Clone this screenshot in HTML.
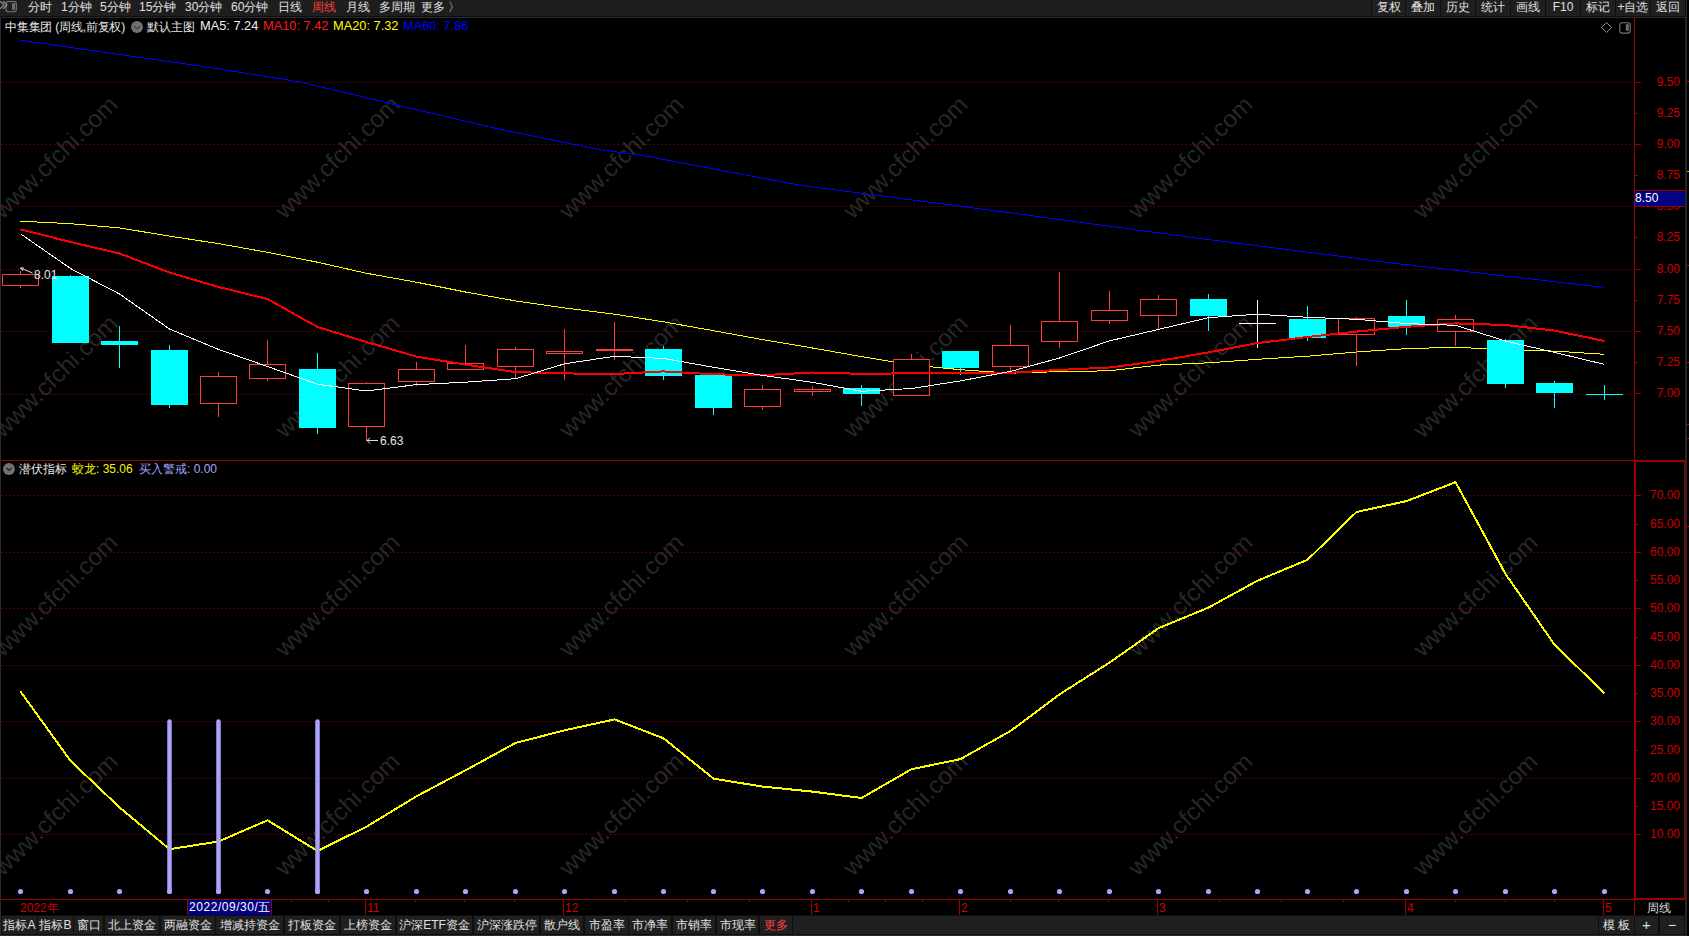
<!DOCTYPE html>
<html><head><meta charset="utf-8"><style>
html,body{margin:0;padding:0;background:#000;width:1689px;height:936px;overflow:hidden;position:relative;font-family:"Liberation Sans",sans-serif;}
.tb{position:absolute;left:0;top:0;width:1689px;height:16px;background:#1e1e1e;}
.sep{position:absolute;left:0;top:16px;width:1689px;height:1px;background:#0e0e0e;}
.sep2{position:absolute;left:0;top:17px;width:1687px;height:1px;background:#2b2b2b;}
.t{position:absolute;white-space:nowrap;font-size:12px;line-height:14px;color:#e0e0e0;}
.bb{position:absolute;left:1px;top:915px;width:1686px;height:20px;background:#0e0e0e;}
.bb2{position:absolute;left:0;top:935px;width:1687px;height:1px;background:#2b2b2b;}
.btn{position:absolute;top:916px;height:18px;background:#1f1f1f;color:#e0e0e0;font-size:12px;line-height:18px;text-align:center;white-space:nowrap;}
.rb{position:absolute;top:0;height:16px;background:#1f1f1f;color:#e0e0e0;font-size:12px;line-height:14px;text-align:center;}
.rbg{position:absolute;top:0;left:1371px;width:316px;height:16px;background:#0e0e0e;}
</style></head><body>
<div class="tb"></div><div class="sep"></div><div class="sep2"></div>
<svg width="1689" height="936" viewBox="0 0 1689 936" style="position:absolute;left:0;top:0">
<g font-family="Liberation Sans, sans-serif" font-size="24" fill="#272727">
<text x="55" y="157" text-anchor="middle" dominant-baseline="central" textLength="163" lengthAdjust="spacingAndGlyphs" transform="rotate(-44.4 55 157)">www.cfchi.com</text>
<text x="337" y="157" text-anchor="middle" dominant-baseline="central" textLength="163" lengthAdjust="spacingAndGlyphs" transform="rotate(-44.4 337 157)">www.cfchi.com</text>
<text x="621" y="157" text-anchor="middle" dominant-baseline="central" textLength="163" lengthAdjust="spacingAndGlyphs" transform="rotate(-44.4 621 157)">www.cfchi.com</text>
<text x="905" y="157" text-anchor="middle" dominant-baseline="central" textLength="163" lengthAdjust="spacingAndGlyphs" transform="rotate(-44.4 905 157)">www.cfchi.com</text>
<text x="1190" y="157" text-anchor="middle" dominant-baseline="central" textLength="163" lengthAdjust="spacingAndGlyphs" transform="rotate(-44.4 1190 157)">www.cfchi.com</text>
<text x="1475" y="157" text-anchor="middle" dominant-baseline="central" textLength="163" lengthAdjust="spacingAndGlyphs" transform="rotate(-44.4 1475 157)">www.cfchi.com</text>
<text x="55" y="376" text-anchor="middle" dominant-baseline="central" textLength="163" lengthAdjust="spacingAndGlyphs" transform="rotate(-44.4 55 376)">www.cfchi.com</text>
<text x="337" y="376" text-anchor="middle" dominant-baseline="central" textLength="163" lengthAdjust="spacingAndGlyphs" transform="rotate(-44.4 337 376)">www.cfchi.com</text>
<text x="621" y="376" text-anchor="middle" dominant-baseline="central" textLength="163" lengthAdjust="spacingAndGlyphs" transform="rotate(-44.4 621 376)">www.cfchi.com</text>
<text x="905" y="376" text-anchor="middle" dominant-baseline="central" textLength="163" lengthAdjust="spacingAndGlyphs" transform="rotate(-44.4 905 376)">www.cfchi.com</text>
<text x="1190" y="376" text-anchor="middle" dominant-baseline="central" textLength="163" lengthAdjust="spacingAndGlyphs" transform="rotate(-44.4 1190 376)">www.cfchi.com</text>
<text x="1475" y="376" text-anchor="middle" dominant-baseline="central" textLength="163" lengthAdjust="spacingAndGlyphs" transform="rotate(-44.4 1475 376)">www.cfchi.com</text>
<text x="55" y="595" text-anchor="middle" dominant-baseline="central" textLength="163" lengthAdjust="spacingAndGlyphs" transform="rotate(-44.4 55 595)">www.cfchi.com</text>
<text x="337" y="595" text-anchor="middle" dominant-baseline="central" textLength="163" lengthAdjust="spacingAndGlyphs" transform="rotate(-44.4 337 595)">www.cfchi.com</text>
<text x="621" y="595" text-anchor="middle" dominant-baseline="central" textLength="163" lengthAdjust="spacingAndGlyphs" transform="rotate(-44.4 621 595)">www.cfchi.com</text>
<text x="905" y="595" text-anchor="middle" dominant-baseline="central" textLength="163" lengthAdjust="spacingAndGlyphs" transform="rotate(-44.4 905 595)">www.cfchi.com</text>
<text x="1190" y="595" text-anchor="middle" dominant-baseline="central" textLength="163" lengthAdjust="spacingAndGlyphs" transform="rotate(-44.4 1190 595)">www.cfchi.com</text>
<text x="1475" y="595" text-anchor="middle" dominant-baseline="central" textLength="163" lengthAdjust="spacingAndGlyphs" transform="rotate(-44.4 1475 595)">www.cfchi.com</text>
<text x="55" y="814" text-anchor="middle" dominant-baseline="central" textLength="163" lengthAdjust="spacingAndGlyphs" transform="rotate(-44.4 55 814)">www.cfchi.com</text>
<text x="337" y="814" text-anchor="middle" dominant-baseline="central" textLength="163" lengthAdjust="spacingAndGlyphs" transform="rotate(-44.4 337 814)">www.cfchi.com</text>
<text x="621" y="814" text-anchor="middle" dominant-baseline="central" textLength="163" lengthAdjust="spacingAndGlyphs" transform="rotate(-44.4 621 814)">www.cfchi.com</text>
<text x="905" y="814" text-anchor="middle" dominant-baseline="central" textLength="163" lengthAdjust="spacingAndGlyphs" transform="rotate(-44.4 905 814)">www.cfchi.com</text>
<text x="1190" y="814" text-anchor="middle" dominant-baseline="central" textLength="163" lengthAdjust="spacingAndGlyphs" transform="rotate(-44.4 1190 814)">www.cfchi.com</text>
<text x="1475" y="814" text-anchor="middle" dominant-baseline="central" textLength="163" lengthAdjust="spacingAndGlyphs" transform="rotate(-44.4 1475 814)">www.cfchi.com</text>
</g>
<g stroke="#a00000" stroke-width="1" stroke-dasharray="1 3">
<line x1="2" y1="82.5" x2="1632" y2="82.5"/>
<line x1="2" y1="144.5" x2="1632" y2="144.5"/>
<line x1="2" y1="206.5" x2="1632" y2="206.5"/>
<line x1="2" y1="269.5" x2="1632" y2="269.5"/>
<line x1="2" y1="331.5" x2="1632" y2="331.5"/>
<line x1="2" y1="394.5" x2="1632" y2="394.5"/>
<line x1="2" y1="495.5" x2="1632" y2="495.5"/>
<line x1="2" y1="552.5" x2="1632" y2="552.5"/>
<line x1="2" y1="608.5" x2="1632" y2="608.5"/>
<line x1="2" y1="665.5" x2="1632" y2="665.5"/>
<line x1="2" y1="721.5" x2="1632" y2="721.5"/>
<line x1="2" y1="778.5" x2="1632" y2="778.5"/>
<line x1="2" y1="834.5" x2="1632" y2="834.5"/>
</g>
<polyline fill="none" stroke="#0000ff" stroke-width="1" shape-rendering="crispEdges" points="20,40.2 200,66 300,81.9 400,105.8 500,129.3 600,149.7 640,155 800,185.2 1000,211.4 1200,238.5 1400,263.9 1604,287.4"/>
<polyline fill="none" stroke="#ffff00" stroke-width="1" shape-rendering="crispEdges" points="20.5,221.2 70.5,223.7 119.5,227.9 169.5,236.1 218.5,243.6 267.5,252.3 317.5,262.2 366.5,273.3 416.5,282.2 465.5,292.0 515.5,300.9 564.5,308.0 614.5,314.2 663.5,321.8 713.5,330.7 762.5,339.6 812.5,348 861.5,356.6 911.5,364.9 960.5,369.7 1010.5,373.2 1059.5,371.6 1109.5,370.8 1158.5,365.1 1208.5,362.8 1257.5,359.3 1307.5,356.2 1356.5,352.0 1406.5,348.6 1455.5,347.3 1505.5,349.6 1554.5,351.1 1604.5,354.3"/>
<line x1="20.5" y1="271" x2="20.5" y2="288" stroke="#ff3c3c" stroke-width="1"/>
<rect x="2.5" y="274.5" width="36" height="11" fill="#000" stroke="#ff3c3c" stroke-width="1"/>
<line x1="70.5" y1="275" x2="70.5" y2="343" stroke="#00ffff" stroke-width="1"/>
<rect x="52" y="276" width="37" height="67" fill="#00ffff"/>
<line x1="119.5" y1="326" x2="119.5" y2="368" stroke="#00ffff" stroke-width="1"/>
<rect x="101" y="341" width="37" height="4" fill="#00ffff"/>
<line x1="169.5" y1="345" x2="169.5" y2="408" stroke="#00ffff" stroke-width="1"/>
<rect x="151" y="350" width="37" height="55" fill="#00ffff"/>
<line x1="218.5" y1="372" x2="218.5" y2="417" stroke="#ff3c3c" stroke-width="1"/>
<rect x="200.5" y="376.5" width="36" height="27" fill="#000" stroke="#ff3c3c" stroke-width="1"/>
<line x1="267.5" y1="340" x2="267.5" y2="381" stroke="#ff3c3c" stroke-width="1"/>
<rect x="249.5" y="364.5" width="36" height="14" fill="#000" stroke="#ff3c3c" stroke-width="1"/>
<line x1="317.5" y1="353" x2="317.5" y2="434" stroke="#00ffff" stroke-width="1"/>
<rect x="299" y="369" width="37" height="59" fill="#00ffff"/>
<line x1="366.5" y1="382" x2="366.5" y2="441" stroke="#ff3c3c" stroke-width="1"/>
<rect x="348.5" y="383.5" width="36" height="43" fill="#000" stroke="#ff3c3c" stroke-width="1"/>
<line x1="416.5" y1="362" x2="416.5" y2="386" stroke="#ff3c3c" stroke-width="1"/>
<rect x="398.5" y="369.5" width="36" height="12" fill="#000" stroke="#ff3c3c" stroke-width="1"/>
<line x1="465.5" y1="345" x2="465.5" y2="370" stroke="#ff3c3c" stroke-width="1"/>
<rect x="447.5" y="363.5" width="36" height="6" fill="#000" stroke="#ff3c3c" stroke-width="1"/>
<line x1="515.5" y1="347" x2="515.5" y2="379" stroke="#ff3c3c" stroke-width="1"/>
<rect x="497.5" y="349.5" width="36" height="17" fill="#000" stroke="#ff3c3c" stroke-width="1"/>
<line x1="564.5" y1="329" x2="564.5" y2="380" stroke="#ff3c3c" stroke-width="1"/>
<rect x="546.5" y="351.5" width="36" height="2" fill="#000" stroke="#ff3c3c" stroke-width="1"/>
<line x1="614.5" y1="322" x2="614.5" y2="360" stroke="#ff3c3c" stroke-width="1"/>
<rect x="596" y="349" width="37" height="2" fill="#ff3c3c"/>
<line x1="663.5" y1="346" x2="663.5" y2="380" stroke="#00ffff" stroke-width="1"/>
<rect x="645" y="349" width="37" height="27" fill="#00ffff"/>
<line x1="713.5" y1="375" x2="713.5" y2="415" stroke="#00ffff" stroke-width="1"/>
<rect x="695" y="375" width="37" height="33" fill="#00ffff"/>
<line x1="762.5" y1="385" x2="762.5" y2="410" stroke="#ff3c3c" stroke-width="1"/>
<rect x="744.5" y="389.5" width="36" height="17" fill="#000" stroke="#ff3c3c" stroke-width="1"/>
<line x1="812.5" y1="386" x2="812.5" y2="396" stroke="#ff3c3c" stroke-width="1"/>
<rect x="794.5" y="389.5" width="36" height="2" fill="#000" stroke="#ff3c3c" stroke-width="1"/>
<line x1="861.5" y1="385" x2="861.5" y2="406" stroke="#00ffff" stroke-width="1"/>
<rect x="843" y="388" width="37" height="6" fill="#00ffff"/>
<line x1="911.5" y1="354" x2="911.5" y2="396" stroke="#ff3c3c" stroke-width="1"/>
<rect x="893.5" y="359.5" width="36" height="36" fill="#000" stroke="#ff3c3c" stroke-width="1"/>
<line x1="960.5" y1="351" x2="960.5" y2="375" stroke="#00ffff" stroke-width="1"/>
<rect x="942" y="351" width="37" height="17" fill="#00ffff"/>
<line x1="1010.5" y1="325" x2="1010.5" y2="371" stroke="#ff3c3c" stroke-width="1"/>
<rect x="992.5" y="345.5" width="36" height="21" fill="#000" stroke="#ff3c3c" stroke-width="1"/>
<line x1="1059.5" y1="272" x2="1059.5" y2="348" stroke="#ff3c3c" stroke-width="1"/>
<rect x="1041.5" y="321.5" width="36" height="20" fill="#000" stroke="#ff3c3c" stroke-width="1"/>
<line x1="1109.5" y1="291" x2="1109.5" y2="324" stroke="#ff3c3c" stroke-width="1"/>
<rect x="1091.5" y="310.5" width="36" height="10" fill="#000" stroke="#ff3c3c" stroke-width="1"/>
<line x1="1158.5" y1="295" x2="1158.5" y2="329" stroke="#ff3c3c" stroke-width="1"/>
<rect x="1140.5" y="299.5" width="36" height="16" fill="#000" stroke="#ff3c3c" stroke-width="1"/>
<line x1="1208.5" y1="294" x2="1208.5" y2="331" stroke="#00ffff" stroke-width="1"/>
<rect x="1190" y="299" width="37" height="17" fill="#00ffff"/>
<line x1="1257.5" y1="300" x2="1257.5" y2="348" stroke="#ffffff" stroke-width="1"/>
<rect x="1239" y="323" width="37" height="1" fill="#ffffff"/>
<line x1="1307.5" y1="306" x2="1307.5" y2="341" stroke="#00ffff" stroke-width="1"/>
<rect x="1289" y="319" width="37" height="19" fill="#00ffff"/>
<line x1="1356.5" y1="317" x2="1356.5" y2="366" stroke="#ff3c3c" stroke-width="1"/>
<rect x="1338.5" y="318.5" width="36" height="16" fill="#000" stroke="#ff3c3c" stroke-width="1"/>
<line x1="1406.5" y1="300" x2="1406.5" y2="335" stroke="#00ffff" stroke-width="1"/>
<rect x="1388" y="316" width="37" height="11" fill="#00ffff"/>
<line x1="1455.5" y1="315" x2="1455.5" y2="346" stroke="#ff3c3c" stroke-width="1"/>
<rect x="1437.5" y="319.5" width="36" height="12" fill="#000" stroke="#ff3c3c" stroke-width="1"/>
<line x1="1505.5" y1="339" x2="1505.5" y2="388" stroke="#00ffff" stroke-width="1"/>
<rect x="1487" y="340" width="37" height="44" fill="#00ffff"/>
<line x1="1554.5" y1="381" x2="1554.5" y2="408" stroke="#00ffff" stroke-width="1"/>
<rect x="1536" y="383" width="37" height="10" fill="#00ffff"/>
<line x1="1604.5" y1="385" x2="1604.5" y2="400" stroke="#00ffff" stroke-width="1"/>
<rect x="1586" y="394" width="37" height="1" fill="#00ffff"/>
<polyline fill="none" stroke="#ff0000" stroke-width="2" shape-rendering="crispEdges" points="20.5,229.4 70.5,242.0 119.5,253.5 169.5,272.5 218.5,287.0 267.5,299.0 317.5,327.0 366.5,342.0 416.5,356.6 465.5,364.6 515.5,372.1 564.5,373.4 614.5,374.0 663.5,371.4 713.5,374.3 762.5,375.2 812.5,372.5 861.5,373.8 911.5,373.3 960.5,372.6 1010.5,372.8 1059.5,369.9 1109.5,367.5 1158.5,361.0 1208.5,352.4 1257.5,343.1 1307.5,337.0 1356.5,331.6 1406.5,326.8 1455.5,323.4 1505.5,325.0 1554.5,330.6 1604.5,341.0"/>
<polyline fill="none" stroke="#ffffff" stroke-width="1" shape-rendering="crispEdges" points="20.5,233.8 70.5,268.5 119.5,294.0 169.5,329.0 218.5,349.4 267.5,366.5 317.5,384.2 366.5,391.0 416.5,384.6 465.5,382.2 515.5,378.7 564.5,363.8 614.5,356.3 663.5,358.4 713.5,367.3 762.5,375.4 812.5,382.3 861.5,391.3 911.5,388.5 960.5,380.9 1010.5,371.4 1059.5,358.0 1109.5,340.9 1158.5,329.4 1208.5,317.7 1257.5,314.2 1307.5,317.3 1356.5,319.3 1406.5,323.6 1455.5,325.3 1505.5,341.0 1554.5,352.4 1604.5,364.4"/>
<g font-family="Liberation Sans, sans-serif" font-size="12" fill="#e6e6e6">
<text x="34" y="279">8.01</text>
<text x="380" y="445">6.63</text>
</g>
<path d="M20.5 268 l12 5 M20.5 268 l3.5 0 M20.5 268 l2.5 3" stroke="#ddd" stroke-width="1" fill="none"/>
<path d="M367 440.5 h11 M367 440.5 l3 -2.5 M367 440.5 l3 3" stroke="#ddd" stroke-width="1" fill="none"/>
<polyline fill="none" stroke="#ffff00" stroke-width="2" shape-rendering="crispEdges" points="20.5,691.5 70.5,760.8 119.5,807.4 169.5,849.2 218.5,841.5 267.5,820.3 317.5,851 366.5,826.7 416.5,796.3 465.5,770.3 515.5,743 564.5,730.3 614.5,719.4 663.5,738.3 713.5,778.6 762.5,786.6 812.5,791.6 861.5,798 911.5,769.2 960.5,759.1 1010.5,731 1059.5,694.4 1109.5,662.6 1158.5,628.2 1208.5,607.6 1257.5,580.7 1307.5,559.8 1356.5,512 1406.5,501.1 1455.5,482.2 1505.5,573.9 1554.5,644.7 1604.5,693.3"/>
<line x1="169.5" y1="721.5" x2="169.5" y2="891" stroke="#aaa2ff" stroke-width="4.5" stroke-linecap="round"/>
<line x1="218.5" y1="721.5" x2="218.5" y2="891" stroke="#aaa2ff" stroke-width="4.5" stroke-linecap="round"/>
<line x1="317.5" y1="721.5" x2="317.5" y2="891" stroke="#aaa2ff" stroke-width="4.5" stroke-linecap="round"/>
<circle cx="20.5" cy="891.5" r="2.6" fill="#aaa2ff"/>
<circle cx="70.5" cy="891.5" r="2.6" fill="#aaa2ff"/>
<circle cx="119.5" cy="891.5" r="2.6" fill="#aaa2ff"/>
<circle cx="169.5" cy="891.5" r="2.6" fill="#aaa2ff"/>
<circle cx="218.5" cy="891.5" r="2.6" fill="#aaa2ff"/>
<circle cx="267.5" cy="891.5" r="2.6" fill="#aaa2ff"/>
<circle cx="317.5" cy="891.5" r="2.6" fill="#aaa2ff"/>
<circle cx="366.5" cy="891.5" r="2.6" fill="#aaa2ff"/>
<circle cx="416.5" cy="891.5" r="2.6" fill="#aaa2ff"/>
<circle cx="465.5" cy="891.5" r="2.6" fill="#aaa2ff"/>
<circle cx="515.5" cy="891.5" r="2.6" fill="#aaa2ff"/>
<circle cx="564.5" cy="891.5" r="2.6" fill="#aaa2ff"/>
<circle cx="614.5" cy="891.5" r="2.6" fill="#aaa2ff"/>
<circle cx="663.5" cy="891.5" r="2.6" fill="#aaa2ff"/>
<circle cx="713.5" cy="891.5" r="2.6" fill="#aaa2ff"/>
<circle cx="762.5" cy="891.5" r="2.6" fill="#aaa2ff"/>
<circle cx="812.5" cy="891.5" r="2.6" fill="#aaa2ff"/>
<circle cx="861.5" cy="891.5" r="2.6" fill="#aaa2ff"/>
<circle cx="911.5" cy="891.5" r="2.6" fill="#aaa2ff"/>
<circle cx="960.5" cy="891.5" r="2.6" fill="#aaa2ff"/>
<circle cx="1010.5" cy="891.5" r="2.6" fill="#aaa2ff"/>
<circle cx="1059.5" cy="891.5" r="2.6" fill="#aaa2ff"/>
<circle cx="1109.5" cy="891.5" r="2.6" fill="#aaa2ff"/>
<circle cx="1158.5" cy="891.5" r="2.6" fill="#aaa2ff"/>
<circle cx="1208.5" cy="891.5" r="2.6" fill="#aaa2ff"/>
<circle cx="1257.5" cy="891.5" r="2.6" fill="#aaa2ff"/>
<circle cx="1307.5" cy="891.5" r="2.6" fill="#aaa2ff"/>
<circle cx="1356.5" cy="891.5" r="2.6" fill="#aaa2ff"/>
<circle cx="1406.5" cy="891.5" r="2.6" fill="#aaa2ff"/>
<circle cx="1455.5" cy="891.5" r="2.6" fill="#aaa2ff"/>
<circle cx="1505.5" cy="891.5" r="2.6" fill="#aaa2ff"/>
<circle cx="1554.5" cy="891.5" r="2.6" fill="#aaa2ff"/>
<circle cx="1604.5" cy="891.5" r="2.6" fill="#aaa2ff"/>
<rect x="0" y="17" width="1" height="919" fill="#2b2b2b"/>
<rect x="1634" y="18" width="1" height="442" fill="#9a0000"/>
<rect x="0" y="460" width="1685" height="1" fill="#9a0000"/>
<rect x="1634" y="460" width="2" height="440" fill="#9a0000"/><rect x="1634" y="460" width="51" height="2" fill="#9a0000"/><rect x="1684" y="460" width="1" height="440" fill="#9a0000"/><rect x="1634" y="898" width="51" height="2" fill="#9a0000"/>
<rect x="0" y="899" width="1634" height="1" fill="#9a0000"/>
<rect x="1685" y="17" width="2" height="919" fill="#252525"/>
<g fill="#cc0000" font-family="Liberation Sans, sans-serif" font-size="12" text-anchor="end">
<rect x="1635" y="82" width="6" height="1" fill="#9a0000"/>
<text x="1680" y="85.8">9.50</text>
<rect x="1635" y="113" width="3" height="1" fill="#9a0000"/>
<text x="1680" y="116.8">9.25</text>
<rect x="1635" y="144" width="6" height="1" fill="#9a0000"/>
<text x="1680" y="147.8">9.00</text>
<rect x="1635" y="175" width="3" height="1" fill="#9a0000"/>
<text x="1680" y="178.8">8.75</text>
<rect x="1635" y="206" width="6" height="1" fill="#9a0000"/>
<text x="1680" y="209.8">8.50</text>
<rect x="1635" y="237" width="3" height="1" fill="#9a0000"/>
<text x="1680" y="240.8">8.25</text>
<rect x="1635" y="269" width="6" height="1" fill="#9a0000"/>
<text x="1680" y="272.8">8.00</text>
<rect x="1635" y="300" width="3" height="1" fill="#9a0000"/>
<text x="1680" y="303.8">7.75</text>
<rect x="1635" y="331" width="6" height="1" fill="#9a0000"/>
<text x="1680" y="334.8">7.50</text>
<rect x="1635" y="362" width="3" height="1" fill="#9a0000"/>
<text x="1680" y="365.8">7.25</text>
<rect x="1635" y="393" width="6" height="1" fill="#9a0000"/>
<text x="1680" y="396.8">7.00</text>
<rect x="1636" y="495" width="5" height="1" fill="#9a0000"/>
<text x="1680" y="498.8">70.00</text>
<rect x="1636" y="524" width="2" height="1" fill="#9a0000"/>
<text x="1680" y="527.8">65.00</text>
<rect x="1636" y="552" width="5" height="1" fill="#9a0000"/>
<text x="1680" y="555.8">60.00</text>
<rect x="1636" y="580" width="2" height="1" fill="#9a0000"/>
<text x="1680" y="583.8">55.00</text>
<rect x="1636" y="608" width="5" height="1" fill="#9a0000"/>
<text x="1680" y="611.8">50.00</text>
<rect x="1636" y="637" width="2" height="1" fill="#9a0000"/>
<text x="1680" y="640.8">45.00</text>
<rect x="1636" y="665" width="5" height="1" fill="#9a0000"/>
<text x="1680" y="668.8">40.00</text>
<rect x="1636" y="693" width="2" height="1" fill="#9a0000"/>
<text x="1680" y="696.8">35.00</text>
<rect x="1636" y="721" width="5" height="1" fill="#9a0000"/>
<text x="1680" y="724.8">30.00</text>
<rect x="1636" y="750" width="2" height="1" fill="#9a0000"/>
<text x="1680" y="753.8">25.00</text>
<rect x="1636" y="778" width="5" height="1" fill="#9a0000"/>
<text x="1680" y="781.8">20.00</text>
<rect x="1636" y="806" width="2" height="1" fill="#9a0000"/>
<text x="1680" y="809.8">15.00</text>
<rect x="1636" y="834" width="5" height="1" fill="#9a0000"/>
<text x="1680" y="837.8">10.00</text>
</g>
<rect x="1634.5" y="190.5" width="51" height="16" fill="#000080" stroke="#9a0000" stroke-width="1"/>
<text x="1635" y="202" font-family="Liberation Sans, sans-serif" font-size="12" fill="#ffffff">8.50</text>
<g fill="#d00000" font-family="Liberation Sans, sans-serif" font-size="12">
<text x="20" y="912">2022年</text>
<rect x="365" y="900" width="1" height="15" fill="#9a0000"/>
<text x="367" y="912">11</text>
<rect x="563" y="900" width="1" height="15" fill="#9a0000"/>
<text x="565" y="912">12</text>
<rect x="811" y="900" width="1" height="15" fill="#9a0000"/>
<text x="813" y="912">1</text>
<rect x="959" y="900" width="1" height="15" fill="#9a0000"/>
<text x="961" y="912">2</text>
<rect x="1157" y="900" width="1" height="15" fill="#9a0000"/>
<text x="1159" y="912">3</text>
<rect x="1405" y="900" width="1" height="15" fill="#9a0000"/>
<text x="1407" y="912">4</text>
<rect x="1603" y="900" width="1" height="15" fill="#9a0000"/>
<text x="1605" y="912">5</text>
</g>
<rect x="291" y="900" width="1" height="2" fill="#9a0000"/>
<rect x="328" y="900" width="1" height="2" fill="#9a0000"/>
<rect x="415" y="900" width="1" height="2" fill="#9a0000"/>
<rect x="464" y="900" width="1" height="2" fill="#9a0000"/>
<rect x="514" y="900" width="1" height="2" fill="#9a0000"/>
<rect x="625" y="900" width="1" height="2" fill="#9a0000"/>
<rect x="687" y="900" width="1" height="2" fill="#9a0000"/>
<rect x="749" y="900" width="1" height="2" fill="#9a0000"/>
<rect x="848" y="900" width="1" height="2" fill="#9a0000"/>
<rect x="885" y="900" width="1" height="2" fill="#9a0000"/>
<rect x="922" y="900" width="1" height="2" fill="#9a0000"/>
<rect x="1010" y="900" width="1" height="2" fill="#9a0000"/>
<rect x="1058" y="900" width="1" height="2" fill="#9a0000"/>
<rect x="1108" y="900" width="1" height="2" fill="#9a0000"/>
<rect x="1219" y="900" width="1" height="2" fill="#9a0000"/>
<rect x="1281" y="900" width="1" height="2" fill="#9a0000"/>
<rect x="1343" y="900" width="1" height="2" fill="#9a0000"/>
<rect x="1455" y="900" width="1" height="2" fill="#9a0000"/>
<rect x="1505" y="900" width="1" height="2" fill="#9a0000"/>
<rect x="1554" y="900" width="1" height="2" fill="#9a0000"/>
<rect x="1634" y="900" width="1" height="15" fill="#9a0000"/>
<rect x="188" y="900" width="83" height="15" fill="#000080"/><rect x="187" y="899" width="1" height="16" fill="#9a0000"/><rect x="271" y="899" width="1" height="16" fill="#9a0000"/>
<text x="189" y="911" letter-spacing="0.55" font-family="Liberation Sans, sans-serif" font-size="12" fill="#fff">2022/09/30/五</text>
<text x="1647" y="912" font-family="Liberation Sans, sans-serif" font-size="12" fill="#ddd">周线</text>
</svg>
<div class="t" style="left:28px;top:0;color:#e0e0e0">分时</div>
<div class="t" style="left:61px;top:0;color:#e0e0e0">1分钟</div>
<div class="t" style="left:100px;top:0;color:#e0e0e0">5分钟</div>
<div class="t" style="left:139px;top:0;color:#e0e0e0">15分钟</div>
<div class="t" style="left:185px;top:0;color:#e0e0e0">30分钟</div>
<div class="t" style="left:231px;top:0;color:#e0e0e0">60分钟</div>
<div class="t" style="left:278px;top:0;color:#e0e0e0">日线</div>
<div class="t" style="left:312px;top:0;color:#ff4040">周线</div>
<div class="t" style="left:346px;top:0;color:#e0e0e0">月线</div>
<div class="t" style="left:379px;top:0;color:#e0e0e0">多周期</div>
<div class="t" style="left:421px;top:0;color:#e0e0e0">更多 〉</div>
<div class="rbg"></div>
<div class="rb" style="left:1372px;width:33px">复权</div>
<div class="rb" style="left:1406px;width:34px">叠加</div>
<div class="rb" style="left:1441px;width:34px">历史</div>
<div class="rb" style="left:1476px;width:34px">统计</div>
<div class="rb" style="left:1511px;width:34px">画线</div>
<div class="rb" style="left:1546px;width:34px">F10</div>
<div class="rb" style="left:1581px;width:34px">标记</div>
<div class="rb" style="left:1616px;width:34px">+自选</div>
<div class="rb" style="left:1651px;width:34px">返回</div>
<div class="t" style="left:5px;top:19px;font-size:12px;line-height:16px;letter-spacing:-0.2px;color:#e8e8e8">中集集团 (周线,前复权)</div>
<div style="position:absolute;left:131px;top:21px;width:12px;height:12px;border-radius:50%;background:#707070"></div>
<svg style="position:absolute;left:131px;top:21px" width="12" height="12"><path d="M3 5 L6 8 L9 5" stroke="#2a2a2a" stroke-width="1" fill="none"/></svg>
<div class="t" style="left:147px;top:19px;line-height:16px;color:#e8e8e8">默认主图</div>
<div class="t" style="left:200px;top:18px;line-height:16px;font-size:12.8px;color:#f0f0f0">MA5: 7.24</div>
<div class="t" style="left:263px;top:18px;line-height:16px;font-size:12.8px;color:#ff1a1a">MA10: 7.42</div>
<div class="t" style="left:333px;top:18px;line-height:16px;font-size:12.8px;color:#ffff00">MA20: 7.32</div>
<div class="t" style="left:403px;top:18px;line-height:16px;font-size:12.8px;color:#0000ff">MA60: 7.86</div>
<svg style="position:absolute;left:1600px;top:21px" width="34" height="14"><path d="M6.5 1.5 L11.5 6.5 L6.5 11.5 L1.5 6.5 Z" stroke="#8c8c8c" stroke-width="1" fill="none"/><rect x="19.8" y="1.7" width="10.4" height="10.4" rx="2.3" stroke="#747474" stroke-width="1.1" fill="none"/><rect x="25.9" y="3.2" width="2.9" height="6.6" fill="#6e6e6e"/></svg>
<div style="position:absolute;left:3px;top:463px;width:12px;height:12px;border-radius:50%;background:#707070"></div>
<svg style="position:absolute;left:3px;top:463px" width="12" height="12"><path d="M3.5 5 L6 7.5 L8.5 5" stroke="#222" stroke-width="1.2" fill="none"/></svg>
<div class="t" style="left:19px;top:461px;line-height:16px;color:#e8e8e8">潜伏指标</div>
<div class="t" style="left:72px;top:461px;line-height:16px;color:#f4f400">蛟龙: 35.06</div>
<div class="t" style="left:139px;top:461px;line-height:16px;color:#a4a4ff">买入警戒: 0.00</div>
<svg style="position:absolute;left:0;top:0" width="18" height="15"><rect x="6" y="1.5" width="10.3" height="10.3" rx="2.2" stroke="#7a7a7a" stroke-width="1.1" fill="none"/><rect x="12" y="3.2" width="3" height="6.6" fill="#6e6e6e"/><path d="M0.3 1.3 l3.7 3.7 l-3.7 3.7 M3.3 1.3 l3.7 3.7 l-3.7 3.7" stroke="#8a8a8a" stroke-width="1.3" fill="none"/></svg>
<div class="bb"></div><div class="bb2"></div>
<div class="btn" style="left:2px;width:35px;color:#e0e0e0">指标A</div>
<div class="btn" style="left:38px;width:35px;color:#e0e0e0">指标B</div>
<div class="btn" style="left:74px;width:29px;color:#e0e0e0">窗口</div>
<div class="btn" style="left:105px;width:54px;color:#e0e0e0">北上资金</div>
<div class="btn" style="left:161px;width:54px;color:#e0e0e0">两融资金</div>
<div class="btn" style="left:216px;width:67px;color:#e0e0e0">增减持资金</div>
<div class="btn" style="left:285px;width:54px;color:#e0e0e0">打板资金</div>
<div class="btn" style="left:341px;width:54px;color:#e0e0e0">上榜资金</div>
<div class="btn" style="left:397px;width:75px;color:#e0e0e0">沪深ETF资金</div>
<div class="btn" style="left:474px;width:65px;color:#e0e0e0">沪深涨跌停</div>
<div class="btn" style="left:541px;width:42px;color:#e0e0e0">散户线</div>
<div class="btn" style="left:585px;width:43px;color:#e0e0e0">市盈率</div>
<div class="btn" style="left:629px;width:42px;color:#e0e0e0">市净率</div>
<div class="btn" style="left:673px;width:42px;color:#e0e0e0">市销率</div>
<div class="btn" style="left:717px;width:41px;color:#e0e0e0">市现率</div>
<div class="btn" style="left:760px;width:32px;color:#ff4040">更多</div>
<div class="btn" style="left:793px;width:805px"></div>
<div class="btn" style="left:1599px;width:35px;font-size:12px">模 板</div>
<div class="btn" style="left:1635px;width:23px;font-size:15px">+</div>
<div class="btn" style="left:1660px;width:24px;font-size:14px">−</div>
<div style="position:absolute;left:1687px;top:0;width:2px;height:936px;background:#000"></div><div style="position:absolute;left:1686px;top:0;width:1px;height:17px;background:#2b2b2b"></div><div style="position:absolute;left:1685px;top:17px;width:2px;height:919px;background:#252525"></div>
<div style="position:absolute;left:1687px;top:81px;width:2px;height:1px;background:#b00000"></div><div style="position:absolute;left:1687px;top:171px;width:2px;height:1px;background:#c8a000"></div><div style="position:absolute;left:1687px;top:265px;width:2px;height:1px;background:#b00000"></div><div style="position:absolute;left:1687px;top:362px;width:2px;height:1px;background:#b00000"></div><div style="position:absolute;left:1687px;top:424px;width:2px;height:1px;background:#b00000"></div><div style="position:absolute;left:1687px;top:438px;width:2px;height:1px;background:#b00000"></div><div style="position:absolute;left:1687px;top:526px;width:2px;height:1px;background:#b00000"></div></body></html>
